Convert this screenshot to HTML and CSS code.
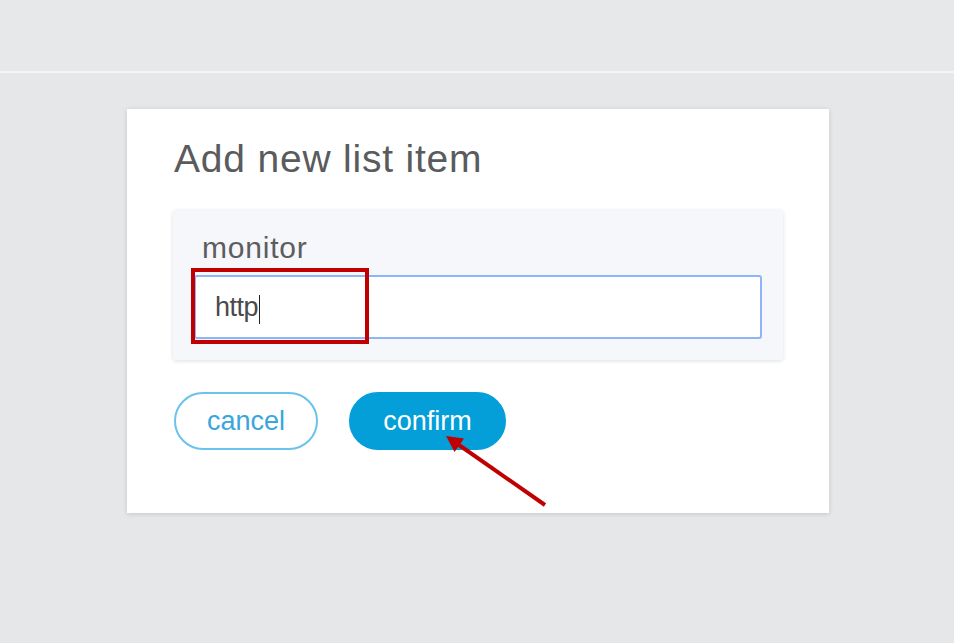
FILE: index.html
```html
<!DOCTYPE html>
<html>
<head>
<meta charset="utf-8">
<link rel="stylesheet" href="styles.css">
</head>
<body>
<div class="topbar"></div>
<div class="card">
  <h1 class="title">Add new list item</h1>
  <div class="panel">
    <div class="label">monitor</div>
    <div class="input"><span class="value">http</span><span class="caret"></span></div>
  </div>
  <div class="actions">
    <button class="btn btn-cancel">cancel</button>
    <button class="btn btn-confirm">confirm</button>
  </div>
  <div class="highlight"></div>
  <svg class="arrow" width="702" height="404" viewBox="0 0 702 404">
    <line x1="418" y1="396" x2="332" y2="336" stroke="#c00000" stroke-width="4"/>
    <polygon points="319,327 337,329.6 327.5,343" fill="#c00000"/>
  </svg>
</div>
</body>
</html>
```
FILE: styles.css
```css
html, body {
  margin: 0;
  padding: 0;
}
body {
  background: #e6e7e9;
  width: 954px;
  height: 643px;
  overflow: hidden;
  font-family: "Liberation Sans", Arial, sans-serif;
}
.topbar {
  height: 71px;
  border-bottom: 2px solid #f3f4f5;
  background: #e7e8ea;
}
.card {
  position: relative;
  margin: 36px 0 0 127px;
  width: 702px;
  height: 404px;
  box-sizing: border-box;
  background: #ffffff;
  box-shadow: 0 1px 5px rgba(0, 0, 0, 0.14);
  padding: 30px 46px 0 46px;
}
.title {
  margin: 0 0 31px 1px;
  font-size: 39px;
  line-height: 40px;
  font-weight: normal;
  letter-spacing: 0.8px;
  color: #5a5b5d;
}
.panel {
  background: #f5f7fa;
  box-shadow: 0 1px 4px rgba(0, 0, 0, 0.13);
  border-radius: 3px;
  padding: 21px;
  width: 610px;
  box-sizing: border-box;
}
.label {
  margin-left: 8px;
  font-size: 30px;
  line-height: 34px;
  letter-spacing: 0.8px;
  color: #5c5d5f;
  margin-bottom: 10px;
}
.input {
  height: 64px;
  box-sizing: border-box;
  border: 2px solid #8db5f7;
  border-radius: 3px;
  background: #ffffff;
  display: flex;
  align-items: center;
  padding-left: 19px;
  font-size: 27px;
  letter-spacing: -0.5px;
  color: #4a4a4c;
}
.caret {
  display: inline-block;
  width: 1px;
  height: 29px;
  background: #222;
  margin-left: 1px;
  margin-top: 4px;
}
.actions {
  display: flex;
  gap: 31px;
  margin-top: 32px;
  margin-left: 1px;
}
.btn {
  height: 58px;
  border-radius: 29px;
  font-family: "Liberation Sans", Arial, sans-serif;
  font-size: 27px;
  padding: 0;
  box-sizing: border-box;
  cursor: pointer;
}
.btn-cancel {
  width: 144px;
  background: #ffffff;
  border: 2px solid #6ac3ea;
  color: #3ba6dd;
}
.btn-confirm {
  width: 157px;
  background: #049fd9;
  border: 2px solid #049fd9;
  color: #ffffff;
}
.highlight {
  position: absolute;
  left: 64px;
  top: 159px;
  width: 178px;
  height: 76px;
  box-sizing: border-box;
  border: 4px solid #c00000;
}
.arrow {
  position: absolute;
  left: 0;
  top: 0;
  pointer-events: none;
}
```
